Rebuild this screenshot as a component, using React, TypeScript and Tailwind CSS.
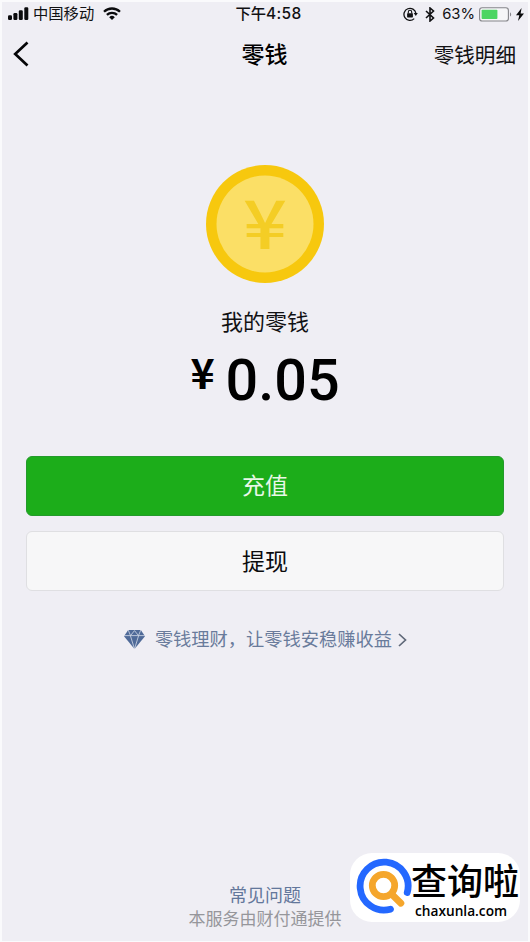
import type { ReactNode } from 'react'

function SignalIcon() {
  return (
    <svg className="h-[13px] w-[21px] shrink-0" viewBox="0 0 21 13" fill="#0b0b0d">
      <rect x="0" y="8.2" width="4" height="4.8" rx="1.2" />
      <rect x="5.4" y="6" width="4" height="7" rx="1.2" />
      <rect x="10.8" y="3.2" width="4" height="9.8" rx="1.2" />
      <rect x="16.3" y="0.2" width="4" height="12.8" rx="1.2" />
    </svg>
  )
}

function WifiIcon() {
  return (
    <svg className="h-[13px] w-[18px] shrink-0" viewBox="0 0 18 13" fill="none" stroke="#0b0b0d" strokeWidth="2.3">
      <path d="M1 4.8a11.4 11.4 0 0 1 16 0" />
      <path d="M3.9 7.9a7.3 7.3 0 0 1 10.2 0" />
      <path d="M9 13 6.2 10.2a4 4 0 0 1 5.6 0z" fill="#0b0b0d" stroke="none" />
    </svg>
  )
}

function RotationLockIcon() {
  return (
    <svg className="h-[14px] w-[15px] shrink-0" viewBox="0 0 15 14" fill="none" stroke="#111113">
      <path d="M11.2 11.6A6 6 0 1 1 12.9 6.4" strokeWidth="1.3" />
      <path d="M10.7 6.1h4.1l-2 3z" fill="#111113" stroke="none" />
      <rect x="4.1" y="6.2" width="5.8" height="4.2" rx=".6" fill="#111113" stroke="none" />
      <path d="M5.3 6.4V5a1.7 1.7 0 0 1 3.4 0v1.4" strokeWidth="1.1" />
    </svg>
  )
}

function BluetoothIcon() {
  return (
    <svg className="h-[15px] w-[10px] shrink-0" viewBox="0 0 10 15" fill="none" stroke="#111113" strokeWidth="1.6">
      <path d="m1 4 7.5 7L5 14V1l3.5 3L1 11" />
    </svg>
  )
}

function BatteryIcon() {
  return (
    <svg className="h-[15px] w-[33px] shrink-0" viewBox="0 0 33 15">
      <rect x=".6" y=".8" width="28.8" height="13.2" rx="2.6" fill="#f6f6f8" stroke="#85858a" strokeWidth="1.1" />
      <rect x="2.6" y="2.7" width="15.8" height="9.4" rx=".8" fill="#4cd562" />
      <path d="M31 5.2c1.6.8 1.6 3.6 0 4.4z" fill="#85858a" />
    </svg>
  )
}

function BoltIcon() {
  return (
    <svg className="h-[13px] w-[8px] shrink-0" viewBox="0 0 8 12" preserveAspectRatio="none" fill="#0b0b0d">
      <path d="M5.6 0 0 6.8h3.3L2 12l6-7H4.6z" />
    </svg>
  )
}

function CoinIcon() {
  return (
    <svg className="h-[118px] w-[118px]" viewBox="0 0 118 118">
      <circle cx="59" cy="59" r="59" fill="#f7c80e" />
      <circle cx="59" cy="59" r="48.5" fill="#fbdf66" />
      <text
        x="59"
        y="84"
        textAnchor="middle"
        textLength="44"
        lengthAdjust="spacingAndGlyphs"
        fontSize="67"
        fontWeight="500"
        fontFamily="'Noto Sans CJK SC', sans-serif"
        fill="#f4cd25"
      >
        ¥
      </text>
    </svg>
  )
}

function DiamondIcon() {
  return (
    <svg className="h-[19px] w-[21px] shrink-0" viewBox="0 0 21 19">
      <path d="M4.2 0h12.6L21 6.2 10.5 19 0 6.2z" fill="#4f6a98" />
      <path
        d="M0 5.6h21M4.2 0l2.3 5.6 4-5 4 5 2.3-5.6M6.5 6l4 13 4-13"
        fill="none"
        stroke="#d3dae8"
        strokeWidth=".8"
      />
    </svg>
  )
}

function SearchLogo() {
  return (
    <svg className="h-[56px] w-[56px] shrink-0" viewBox="0 0 56 56" fill="none" strokeLinecap="round">
      <path d="M34.5 51.2A24 24 0 1 1 51.2 34.6" stroke="#2468ff" strokeWidth="6.8" />
      <circle cx="27.5" cy="27.5" r="11.2" stroke="#f5a62c" strokeWidth="6.8" />
      <path d="m36.5 37 8.4 8.2" stroke="#f5a62c" strokeWidth="6.8" />
    </svg>
  )
}

function StatusBar() {
  return (
    <div className="grid h-[24px] grid-cols-3 items-center pr-[4px] pl-[6px] text-[15.3px] leading-none text-[#111113]">
      <div className="flex items-center">
        <SignalIcon />
        <span className="ml-[4px] whitespace-nowrap">中国移动</span>
        <span className="ml-[9px]">
          <WifiIcon />
        </span>
      </div>
      <div className="pl-[5px] text-center font-medium whitespace-nowrap">
        下午<span className="font-['Inter'] text-[15.5px] tracking-[0.3px]">4:58</span>
      </div>
      <div className="flex items-center justify-end">
        <RotationLockIcon />
        <span className="ml-[7px]">
          <BluetoothIcon />
        </span>
        <span className="ml-[7px] font-['Inter'] text-[14.8px]">63%</span>
        <span className="ml-[4px]">
          <BatteryIcon />
        </span>
        <span className="ml-[4px]">
          <BoltIcon />
        </span>
      </div>
    </div>
  )
}

function NavBar() {
  return (
    <div className="grid h-[56px] grid-cols-3 items-center pr-[12px] pl-[11px] text-black">
      <svg className="h-[26px] w-[16px]" viewBox="0 0 16 26" fill="none" stroke="#050507" strokeWidth="2.7">
        <path d="M14.5 1.5 2.2 13l12.3 11.5" />
      </svg>
      <h1 className="pt-[2px] text-center text-[23px] leading-none font-medium">零钱</h1>
      <span className="pt-[4px] text-right text-[20.6px] leading-none text-[#111113]">零钱明细</span>
    </div>
  )
}

function ActionButton({ primary, children }: { primary?: boolean; children: ReactNode }) {
  return (
    <button
      className={
        primary
          ? 'h-[60px] w-full rounded-[6px] border border-[#249a2b] bg-[#1cad1a] pt-px text-[23px] leading-none text-[#e9f8e8]'
          : 'h-[60px] w-full rounded-[6px] border border-[#dfdfe2] bg-[#f7f7f8] pt-[2px] text-[23px] leading-none text-[#0b0b0d]'
      }
    >
      {children}
    </button>
  )
}

function Watermark() {
  return (
    <div className="absolute top-[851px] left-[348px] flex h-[69px] w-[170px] items-start rounded-[22px] bg-white pt-[5px] pl-[6px]">
      <SearchLogo />
      <div className="-ml-[1px] flex flex-col pt-[7px] text-black">
        <span className="text-[36px] leading-[36px] font-medium whitespace-nowrap">查询啦</span>
        <span className="mt-[2px] ml-[4px] font-['Open_Sans'] text-[13.7px] leading-[16px] font-semibold">chaxunla.com</span>
      </div>
    </div>
  )
}

export default function App() {
  return (
    <div className="relative flex h-[942px] w-[530px] flex-col overflow-hidden border-t-2 border-r-2 border-b border-l-2 border-[#fafafc] bg-[#efeef4] font-['Liberation_Sans','Noto_Sans_CJK_SC',sans-serif]">
      <StatusBar />
      <NavBar />

      <main className="flex flex-1 flex-col items-center px-[24px] pt-[83px]">
        <CoinIcon />
        <p className="mt-[28px] text-[22px] leading-[24px] text-[#111113]">我的零钱</p>
        <div className="mt-[16px] flex h-[60px] items-start font-['Roboto'] font-medium text-black">
          <span className="-mt-px font-['Noto_Sans_CJK_SC'] text-[41px] leading-[42px] font-bold">¥</span>
          <span className="ml-[11px] text-[57.5px] leading-[60px]">0.05</span>
        </div>

        <div className="mt-[45px] flex w-full flex-col gap-[15px]">
          <ActionButton primary>充值</ActionButton>
          <ActionButton>提现</ActionButton>
        </div>

        <a className="mt-[38px] flex items-center pl-[1px] text-[18.25px] leading-[20px] whitespace-nowrap text-[#697b9b]">
          <DiamondIcon />
          <span className="ml-[10px] pt-px">零钱理财，让零钱安稳赚收益</span>
          <svg className="ml-[6px] h-[14px] w-[9px]" viewBox="0 0 9 14" fill="none" stroke="#5f6878" strokeWidth="1.7">
            <path d="m1 1 6.5 6L1 13" />
          </svg>
        </a>
      </main>

      <footer className="flex flex-col items-center pb-[9px]">
        <a className="text-[18px] leading-[24px] text-[#63779b]">常见问题</a>
        <p className="text-[17px] leading-[24px] text-[#96969b]">本服务由财付通提供</p>
      </footer>

      <Watermark />
    </div>
  )
}
